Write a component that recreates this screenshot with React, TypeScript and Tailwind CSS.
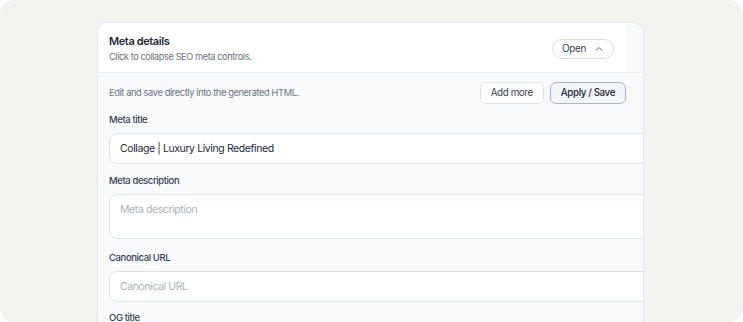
import { ChevronUp } from 'lucide-react';

function Field({ label, value, placeholder, tall }: { label: string; value?: string; placeholder?: string; tall?: boolean }) {
  return (
    <div className="flex flex-col">
      <label className="text-[9.5px] leading-[13px] font-medium text-[#374151]">{label}</label>
      <div
        className={`mt-[7px] w-[560px] rounded-[8px] border border-[#dde3ea] bg-white pl-[10px] text-[10.5px] ${
          tall ? 'h-[45px] pt-[7px]' : 'h-[31px] flex items-center'
        }`}
      >
        {value ? (
          <span className="text-[#1f2937]">{value}</span>
        ) : (
          <span className="text-[#abb1ba]">{placeholder}</span>
        )}
      </div>
    </div>
  );
}

export default function App() {
  return (
    <div
      className="h-[322px] w-full bg-white tracking-[-0.025em]"
      style={{ fontFamily: 'Inter, "Noto Sans", sans-serif' }}
    >
      <div className="h-full overflow-hidden rounded-[14px] bg-[#f3f3ef] pl-[97px] pt-[22px]">
        <div className="h-[320px] w-[547px] overflow-hidden rounded-[10px] border border-[#e4e8ee] bg-[#f8fafc]">
          {/* Header */}
          <div className="flex h-[49px] w-[528px] items-center justify-between bg-white pl-[11px] pr-[12px] pt-[2px]">
            <div>
              <div className="text-[11px] font-semibold leading-[16px] text-[#1f2937]">Meta details</div>
              <div className="mt-[1px] text-[9.2px] leading-[14px] text-[#6b7280]">Click to collapse SEO meta controls.</div>
            </div>
            <button className="flex h-[20px] items-center gap-[7px] rounded-full border border-[#d9dee6] bg-white pl-[9px] pr-[8px] text-[10px] text-[#374151]">
              Open
              <ChevronUp size={12} strokeWidth={1.8} className="text-[#4b5563]" />
            </button>
          </div>

          {/* Body */}
          <div className="border-t border-[#eef1f5] pl-[11px] pt-[9px]">
            <div className="flex w-[517px] items-center justify-between">
              <span className="text-[9.3px] text-[#6b7280]">Edit and save directly into the generated HTML.</span>
              <div className="flex gap-[6px]">
                <button className="h-[22px] rounded-[6px] border border-[#dde3ea] bg-white px-[10px] text-[9.8px] text-[#374151]">
                  Add more
                </button>
                <button className="h-[22px] rounded-[6px] border border-[#a9b4c4] bg-[#f1f4f8] px-[10px] text-[9.8px] font-medium text-[#1f2937]">
                  Apply / Save
                </button>
              </div>
            </div>

            <div className="mt-[9px]">
              <Field label="Meta title" value="Collage | Luxury Living Redefined" />
            </div>
            <div className="mt-[10px]">
              <Field label="Meta description" placeholder="Meta description" tall />
            </div>
            <div className="mt-[12px]">
              <Field label="Canonical URL" placeholder="Canonical URL" />
            </div>
            <div className="mt-[9px]">
              <Field label="OG title" placeholder="OG title" />
            </div>
          </div>
        </div>
      </div>
    </div>
  );
}
